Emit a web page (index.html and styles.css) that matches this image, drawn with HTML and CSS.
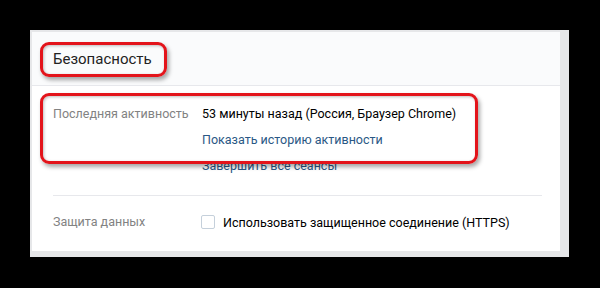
FILE: index.html
```html
<!DOCTYPE html>
<html>
<head>
  <meta charset='utf-8'>
  <meta name='viewport' content='width=device-width, initial-scale=1.0'>
  <title>Безопасность</title>
  <link rel="stylesheet" href="styles.css">
</head>
<body>
  <div class='frame'>
    <div class='card'>
      <div class='card-head'>
        <h2 class='title'>Безопасность</h2>
        <span class='mark mark-title'></span>
      </div>
      <div class='card-body'>
        <div class='row'>
          <div class='label'>Последняя активность</div>
          <div class='value'>
            <div class='line'>53 минуты назад (Россия, Браузер Chrome)</div>
            <a class='link line'>Показать историю активности</a>
            <a class='link line'>Завершить все сеансы</a>
          </div>
        </div>
        <span class='mark mark-activity'></span>
        <hr class='sep'>
        <div class='row row-data'>
          <div class='label'>Защита данных</div>
          <label class='check'>
            <span class='box'></span>
            Использовать защищенное соединение (HTTPS)
          </label>
        </div>
      </div>
    </div>
  </div>
</body>
</html>
```

FILE: styles.css
```css
* { box-sizing: border-box; }

body {
  margin: 0;
  padding: 30px 0 0 30px;
  background-color: #000;
  font-family: Roboto, "Liberation Sans", sans-serif;
  font-size: 12.5px;
  color: #000;
}

.frame {
  width: 539px;
  height: 227px;
  padding: 2px 9px 6px 2px;
  background-color: #e6e7e9;
}

.card {
  position: relative;
  height: 100%;
  background-color: #fff;
}

.card-head {
  height: 54px;
  padding: 0 21px;
  display: flex;
  align-items: center;
  background-color: #fafbfc;
  border-bottom: 1px solid #e7e8ec;
}

.title {
  margin: 0;
  font-size: 15px;
  font-weight: normal;
  color: #222;
}

.card-body {
  padding: 15px 18px 0 21px;
}

.row {
  display: flex;
}

.label {
  width: 149px;
  flex-shrink: 0;
  color: #828282;
  line-height: 26px;
}

.line {
  display: block;
  line-height: 26px;
}

.link {
  color: #2a5885;
}

.sep {
  margin: 16px 0 0;
  border: 0;
  border-top: 1px solid #e7e8ec;
}

.row-data {
  padding-top: 13px;
}

.check {
  display: flex;
  align-items: center;
  height: 26px;
  gap: 8px;
  margin-left: -1px;
}

.box {
  width: 14px;
  height: 14px;
  border: 1px solid #c5d0db;
  border-radius: 2px;
  background-color: #fff;
}

/* red highlight frames drawn over the page */
.mark {
  position: absolute;
  border: 3px solid #e3141b;
  border-radius: 9px;
  box-shadow: 2px 3px 4px rgba(0, 0, 0, 0.35), inset 1px 1px 3px rgba(0, 0, 0, 0.25);
}

.mark-title {
  left: 8px;
  top: 10px;
  width: 127px;
  height: 35px;
}

.mark-activity {
  left: 8px;
  top: 61px;
  width: 438px;
  height: 71px;
}
```
